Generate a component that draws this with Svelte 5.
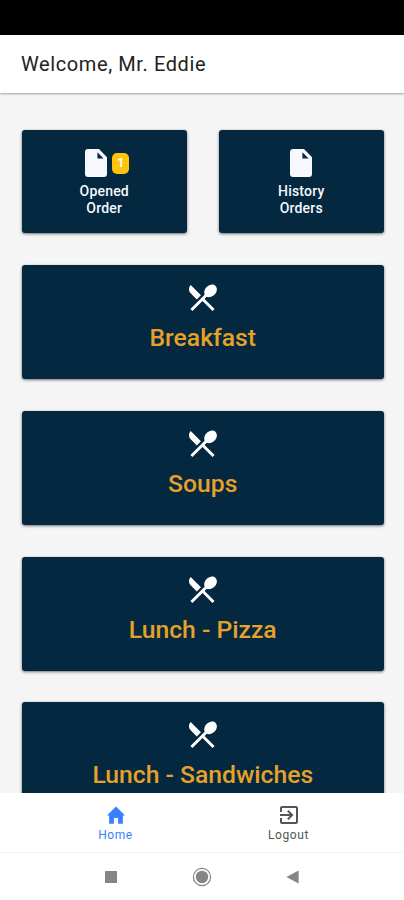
<script>
  let openedCount = $state(1);
  let activeTab = $state('home');

  const categories = ['Breakfast', 'Soups', 'Lunch - Pizza', 'Lunch - Sandwiches'];
</script>

{#snippet documentIcon()}
  <svg class="doc-icon" viewBox="0 0 22 28" aria-hidden="true">
    <path fill-rule="evenodd" d="M3 0h11L22 8.2V25a3 3 0 0 1-3 3H3a3 3 0 0 1-3-3V3a3 3 0 0 1 3-3zM12.4 3.2v6.3h6.2z" />
  </svg>
{/snippet}

<div class="screen">
  <div class="status-bar"></div>

  <header class="toolbar">
    <h1 class="title">Welcome, Mr. Eddie</h1>
  </header>

  <main class="content">
    <div class="orders">
      <button class="card order-card" type="button">
        <span class="order-icon with-badge">
          {@render documentIcon()}
          {#if openedCount > 0}
            <span class="badge">{openedCount}</span>
          {/if}
        </span>
        <span class="order-label">Opened<br />Order</span>
      </button>
      <button class="card order-card" type="button">
        <span class="order-icon">{@render documentIcon()}</span>
        <span class="order-label">History<br />Orders</span>
      </button>
    </div>

    {#each categories as category}
      <button class="card category-card" type="button">
        <svg class="menu-icon" viewBox="0 0 24 24" aria-hidden="true">
          <path d="M8.1 13.34l2.83-2.83L3.91 3.5c-1.56 1.56-1.56 4.09 0 5.66l4.19 4.18zm6.78-1.81c1.53.71 3.68.21 5.27-1.38 1.91-1.91 2.28-4.65.81-6.12-1.46-1.46-4.2-1.1-6.12.81-1.59 1.59-2.09 3.74-1.38 5.27L3.7 19.87l1.41 1.41L12 14.41l6.88 6.88 1.41-1.41L13.41 13l1.47-1.47z" />
        </svg>
        <span class="category-label">{category}</span>
      </button>
    {/each}
  </main>

  <nav class="tabs">
    <button class="tab" class:active={activeTab === 'home'} onclick={() => activeTab = 'home'} type="button">
      <svg viewBox="0 0 24 24" aria-hidden="true">
        <path d="M9.9 20.8v-5.9h4.2v5.9h4.8v-8.3h2.2L12 3.6l-9.1 8.9h2.2v8.3z" />
      </svg>
      <span>Home</span>
    </button>
    <button class="tab" class:active={activeTab === 'logout'} onclick={() => activeTab = 'logout'} type="button">
      <svg viewBox="0 0 24 24" aria-hidden="true">
        <path d="M10.09 15.59L11.5 17l5-5-5-5-1.41 1.41L12.67 11H3v2h9.67l-2.58 2.59zM19 3H5c-1.11 0-2 .9-2 2v4h2V5h14v14H5v-4H3v4c0 1.1.89 2 2 2h14c1.1 0 2-.9 2-2V5c0-1.1-.9-2-2-2z" />
      </svg>
      <span>Logout</span>
    </button>
  </nav>

  <div class="system-nav">
    <svg viewBox="0 0 20 20" aria-hidden="true"><rect x="4" y="4" width="12" height="12" rx="0.5" /></svg>
    <svg viewBox="0 0 20 20" aria-hidden="true">
      <circle cx="10" cy="10" r="6.2" />
      <circle class="ring" cx="10" cy="10" r="8.6" />
    </svg>
    <svg viewBox="0 0 20 20" aria-hidden="true"><path d="M3.4 10L15.6 3.6v12.8z" /></svg>
  </div>
</div>

<style>
  :global(body) { margin: 0; }

  .screen {
    display: flex;
    flex-direction: column;
    height: 100vh;
    overflow: hidden;
    background: #f5f5f5;
    font-family: Roboto, sans-serif;
  }
  button {
    border: none;
    padding: 0;
    font-family: inherit;
    cursor: pointer;
  }
  svg { display: block; fill: currentColor; }

  .status-bar { flex: 0 0 35px; background: #000; }

  .toolbar {
    flex: 0 0 58px;
    box-sizing: border-box;
    display: flex;
    align-items: center;
    padding: 0 21px;
    background: #fff;
    box-shadow: 0 1px 2px rgba(0, 0, 0, 0.35);
    z-index: 1;
  }
  .title {
    margin: 0;
    font-size: 20px;
    font-weight: 400;
    letter-spacing: 0.6px;
    color: #222;
  }

  .content {
    flex: 1;
    min-height: 0;
    overflow: hidden;
    display: flex;
    flex-direction: column;
    gap: 31.8px;
    padding: 37.2px 20px 0 21.5px;
  }

  .card {
    display: flex;
    flex-direction: column;
    align-items: center;
    box-sizing: border-box;
    background: #032840;
    border-radius: 3px;
    box-shadow: 0 1px 3px rgba(0, 0, 0, 0.55);
  }

  .orders { display: flex; gap: 31.5px; flex-shrink: 0; }
  .order-card { flex: 1; height: 103px; padding-top: 19px; color: #f6f8fd; }
  .order-icon { display: flex; align-items: center; gap: 5px; }
  .order-icon.with-badge { padding-left: 6px; }
  .doc-icon { width: 22px; height: 28px; }
  .badge {
    width: 17px;
    height: 21px;
    margin-top: 1px;
    border-radius: 5px;
    background: #ffc409;
    color: #fff;
    font-size: 13px;
    font-weight: 700;
    line-height: 20px;
    text-align: center;
  }
  .order-label {
    margin-top: 6px;
    font-size: 14px;
    font-weight: 500;
    letter-spacing: 0.2px;
    line-height: 17px;
    text-align: center;
  }

  .category-card { flex: 0 0 114px; padding-top: 15px; color: #fff; }
  .menu-icon { width: 35px; height: 35px; }
  .category-label {
    margin-top: 8px;
    font-size: 24.7px;
    font-weight: 500;
    line-height: 30px;
    color: #e5a128;
  }

  .tabs {
    flex: 0 0 60px;
    box-sizing: border-box;
    display: flex;
    justify-content: center;
    background: #fff;
    border-bottom: 1px solid #f3f3f3;
    z-index: 1;
  }
  .tab {
    width: 173px;
    display: flex;
    flex-direction: column;
    align-items: center;
    padding-top: 10px;
    background: none;
    color: #555;
    font-size: 12px;
    letter-spacing: 0.6px;
    line-height: 14px;
  }
  .tab svg { width: 24px; height: 24px; margin-bottom: 1px; }
  .tab.active { color: #3880ff; }

  .system-nav {
    flex: 0 0 47px;
    display: flex;
    justify-content: center;
    align-items: center;
    gap: 71px;
    background: #fff;
    color: #858585;
  }
  .system-nav svg { width: 20px; height: 20px; }
  .ring { fill: none; stroke: currentColor; stroke-width: 1.2; }
</style>
